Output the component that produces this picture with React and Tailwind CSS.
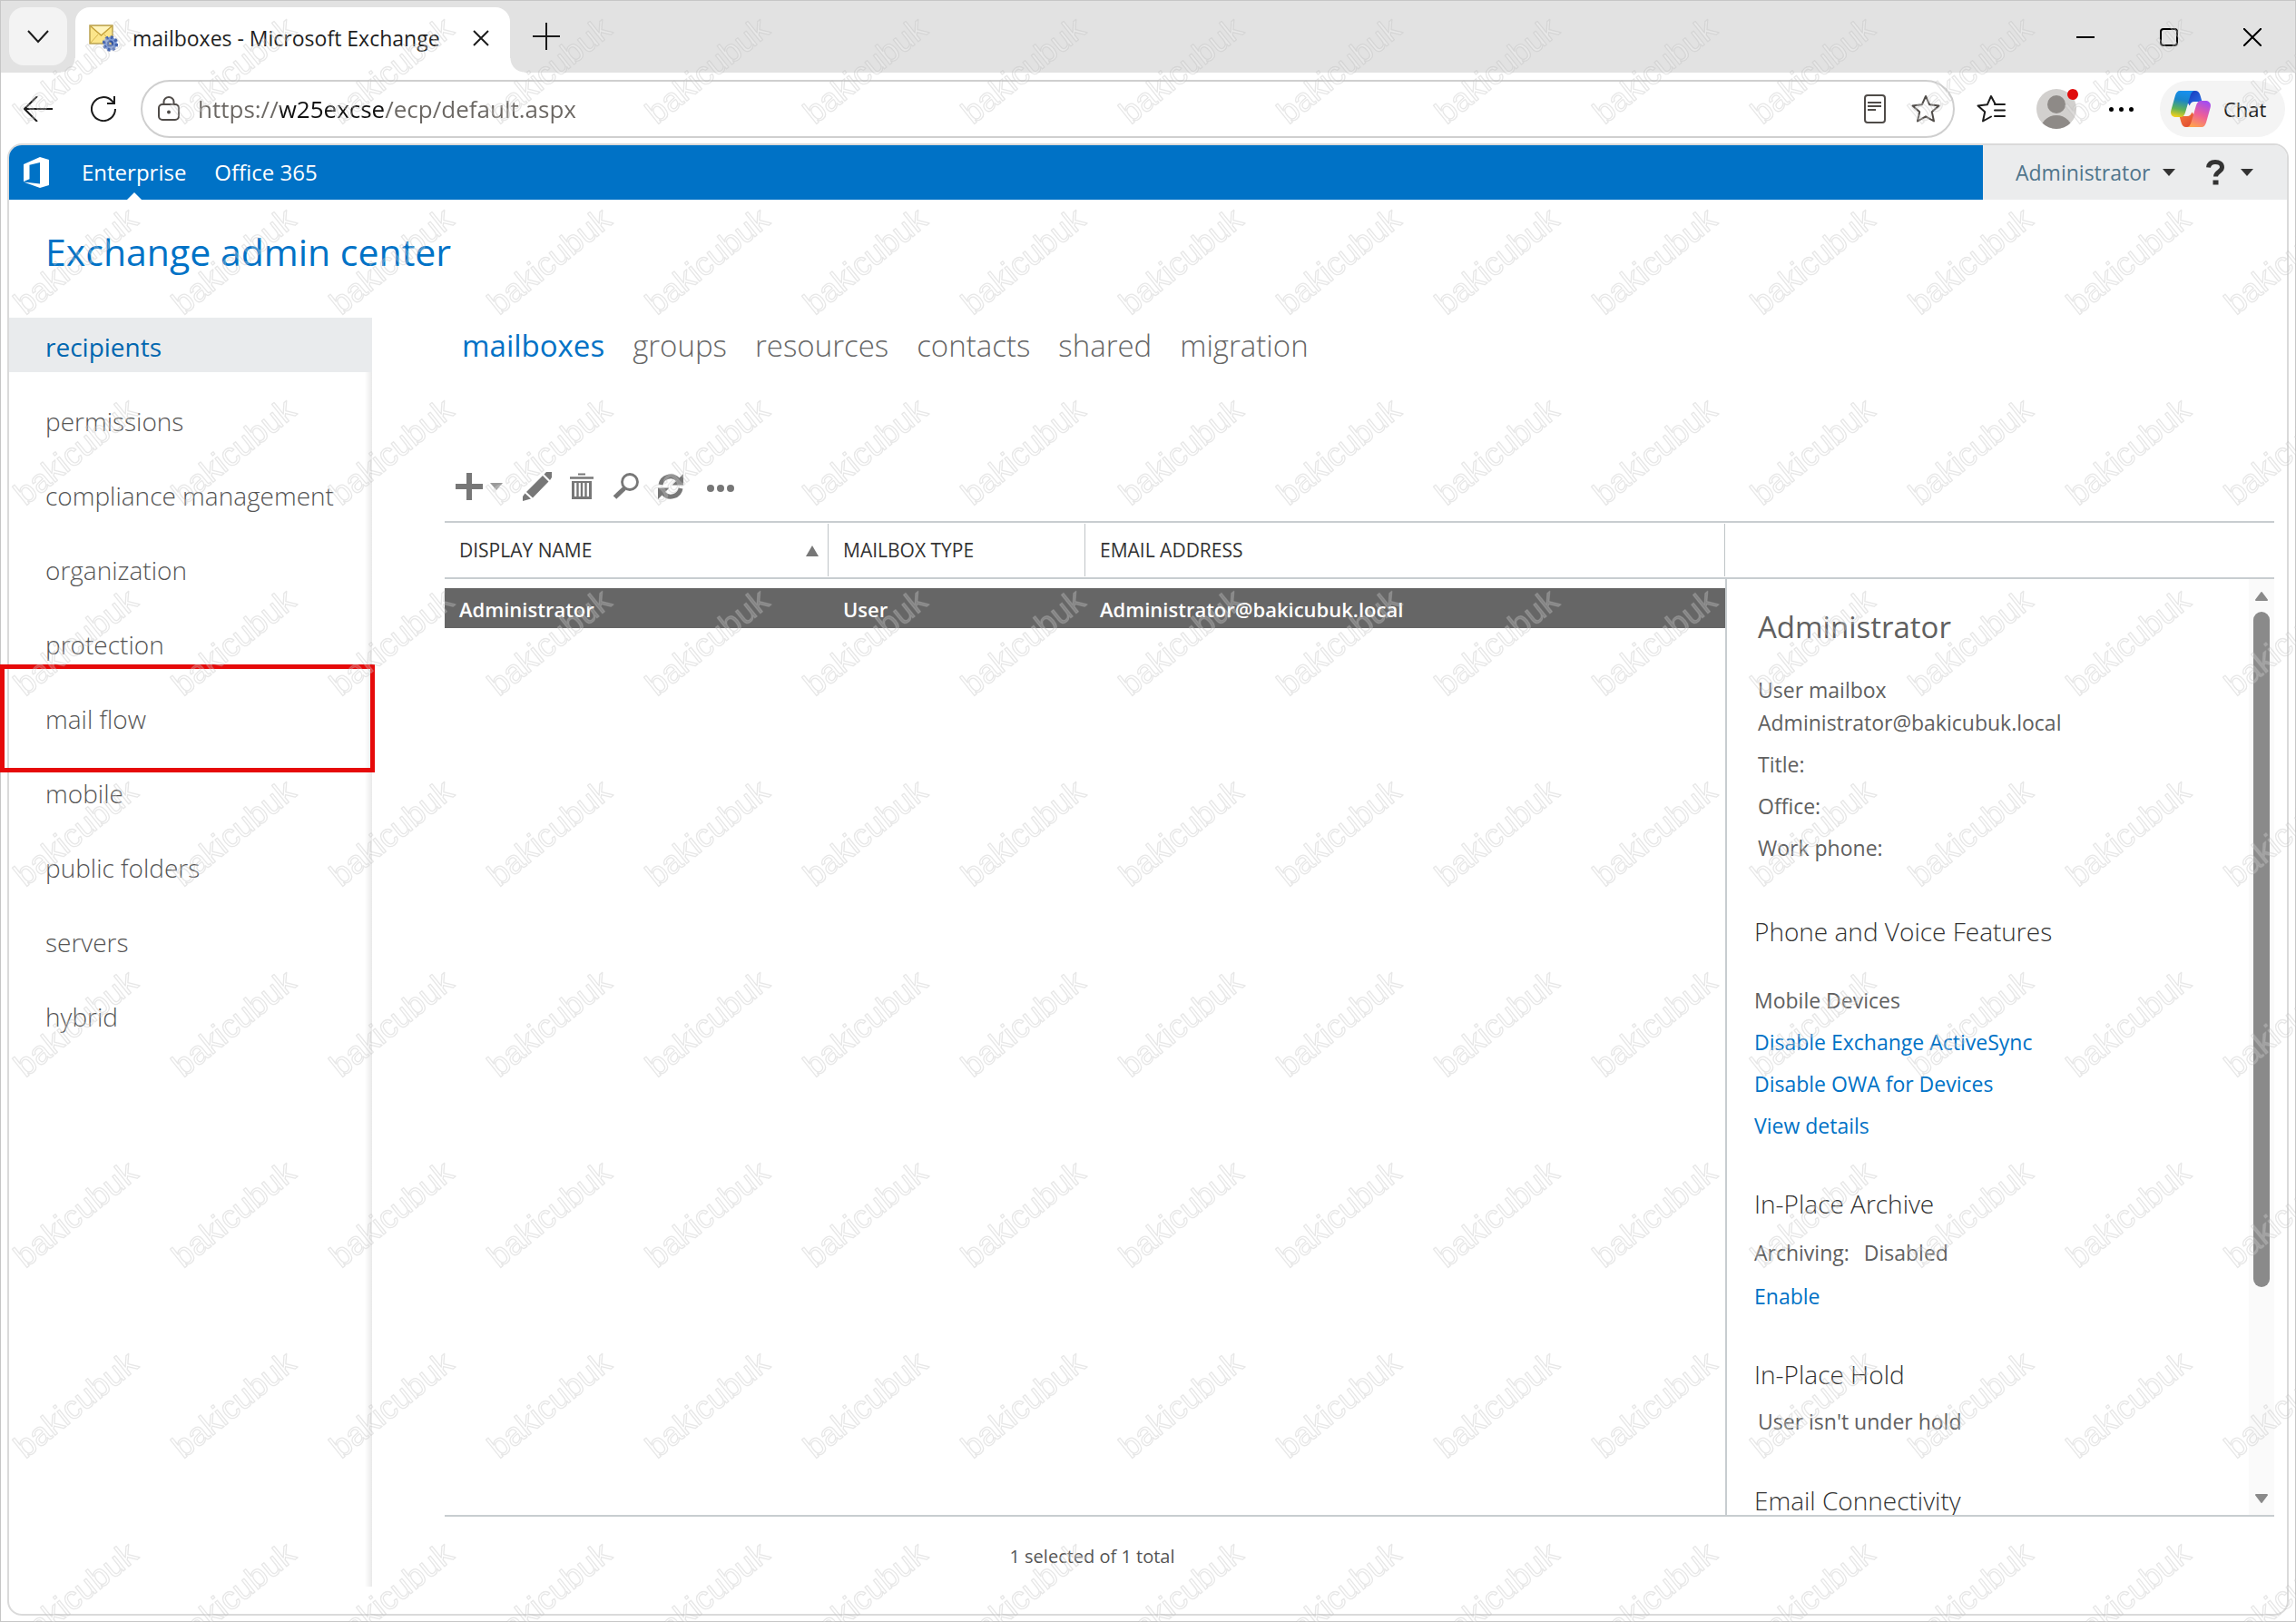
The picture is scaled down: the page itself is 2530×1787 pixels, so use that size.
import React from "react";

const navItems = [
  "recipients",
  "permissions",
  "compliance management",
  "organization",
  "protection",
  "mail flow",
  "mobile",
  "public folders",
  "servers",
  "hybrid",
];

const tabs = ["mailboxes", "groups", "resources", "contacts", "shared", "migration"];

const mailboxes = [
  { name: "Administrator", type: "User", email: "Administrator@bakicubuk.local" },
];

function Caret({ className }) {
  return (
    <svg className={className} viewBox="0 0 14 8" preserveAspectRatio="none" aria-hidden="true">
      <path d="M0 0h14L7 8z" fill="currentColor" />
    </svg>
  );
}

function TabStrip() {
  return (
    <div className="flex h-[79px] items-start bg-[#e2e2e2] pl-[9px]">
      <button
        aria-label="Tab actions"
        className="mt-[7px] flex h-16 w-16 items-center justify-center rounded-2xl bg-[#f3f3f3]"
      >
        <svg className="h-4 w-6" viewBox="0 0 24 16" fill="none" stroke="#1b1b1b" strokeWidth="2">
          <path d="M1 2l11 12L23 2" />
        </svg>
      </button>

      {/* Active tab */}
      <div className="relative ml-[9px] mt-[7px] flex h-[72px] w-[479px] items-center rounded-t-2xl bg-white pb-[5px] pl-[15px] pr-[23px]">
        <span className="absolute bottom-0 -left-4 h-4 w-4 bg-[radial-gradient(circle_at_0_0,transparent_15px,white_16px)]" />
        <span className="absolute bottom-0 -right-4 h-4 w-4 bg-[radial-gradient(circle_at_100%_0,transparent_15px,white_16px)]" />
        <svg className="h-8 w-8 shrink-0" viewBox="0 0 32 32" aria-hidden="true">
          <rect x="1" y="2" width="25" height="20" fill="#fbe58a" stroke="#b9a04e" strokeWidth="1.5" />
          <path d="M2 3l11.500 10L25 3" fill="#fff4bd" stroke="#c4a13c" strokeWidth="1.500" />
          <path d="M2 21l8-9M25 21l-8-9" stroke="#d6b44c" strokeWidth="1" />
          <circle cx="23.500" cy="22" r="7.500" fill="#7f9bd6" />
          <circle cx="23.500" cy="22" r="7" fill="none" stroke="#4464ae" strokeWidth="3.500" strokeDasharray="3 2.500" />
          <circle cx="23.500" cy="22" r="3.500" fill="#34549e" />
          <circle cx="23.500" cy="22" r="1.300" fill="#e6c26a" />
        </svg>
        <span className="ml-4 whitespace-nowrap text-[23px] leading-8 text-[#1f1f1f]">
          mailboxes - Microsoft Exchange
        </span>
        <button aria-label="Close tab" className="ml-auto">
          <svg className="h-[18px] w-[18px]" viewBox="0 0 18 18" stroke="#1b1b1b" strokeWidth="2">
            <path d="M1 1l16 16M17 1L1 17" />
          </svg>
        </button>
      </div>

      <button aria-label="New tab" className="ml-[25px] mt-6">
        <svg className="h-[30px] w-[30px]" viewBox="0 0 30 30" stroke="#1b1b1b" strokeWidth="2">
          <path d="M15 0v30M0 15h30" />
        </svg>
      </button>

      {/* Window controls */}
      <div className="ml-auto mt-[30px] flex gap-[72px] pr-[37px]">
        <button aria-label="Minimize">
          <svg className="h-5 w-5" viewBox="0 0 20 20" stroke="#000" strokeWidth="2">
            <path d="M0 10h20" />
          </svg>
        </button>
        <button aria-label="Maximize">
          <svg className="h-5 w-5" viewBox="0 0 20 20" fill="none" stroke="#000" strokeWidth="2">
            <rect x="1" y="1" width="18" height="18" rx="3" />
          </svg>
        </button>
        <button aria-label="Close window">
          <svg className="h-5 w-5" viewBox="0 0 20 20" stroke="#000" strokeWidth="2">
            <path d="M0 0l20 20M20 0L0 20" />
          </svg>
        </button>
      </div>
    </div>
  );
}

function CopilotLogo() {
  return (
    <svg className="h-10 w-11" viewBox="0 0 44 40" aria-hidden="true">
      <defs>
        <linearGradient id="cpLeft" x1="0.5" y1="0" x2="0.3" y2="1">
          <stop offset="0" stopColor="#1790ee" />
          <stop offset="0.35" stopColor="#1a86c9" />
          <stop offset="0.7" stopColor="#5fb257" />
          <stop offset="1" stopColor="#f2cf1c" />
        </linearGradient>
        <linearGradient id="cpRight" x1="0.7" y1="0" x2="0.3" y2="1">
          <stop offset="0" stopColor="#a44df0" />
          <stop offset="0.5" stopColor="#ee5e98" />
          <stop offset="1" stopColor="#ffa24d" />
        </linearGradient>
        <linearGradient id="cpTop" x1="0" y1="0" x2="1" y2="1">
          <stop offset="0" stopColor="#1433b8" />
          <stop offset="1" stopColor="#2b74e8" />
        </linearGradient>
        <linearGradient id="cpBottom" x1="0" y1="0" x2="1" y2="1">
          <stop offset="0" stopColor="#f97e3c" />
          <stop offset="1" stopColor="#d9402f" />
        </linearGradient>
      </defs>
      <path d="M22 0h5c3 0 4.500 2 5.300 4.500L34.500 12H26c-3 0-4.500 2-5.300 4.500L17 10z" fill="url(#cpTop)" />
      <path d="M22 40h-5c-3 0-4.500-2-5.300-4.500L9.500 28H18c3 0 4.500-2 5.300-4.500L28 30z" fill="url(#cpBottom)" />
      <path d="M10 0h17c-3 0-4.500 2-5.400 5L16 24c-1 3-2.500 5-5.500 5H6c-4.500 0-7-3-5.500-8L5 5c1-3 2.500-5 5-5z" fill="url(#cpLeft)" />
      <path d="M34 40H17c3 0 4.500-2 5.400-5L28 16c1-3 2.500-5 5.500-5H38c4.500 0 7 3 5.500 8L39 35c-1 3-2.500 5-5 5z" fill="url(#cpRight)" />
    </svg>
  );
}

function AddressBar() {
  return (
    <div className="flex h-[78px] items-center bg-white pl-[25px] pr-[11px] pt-[2px]">
      <button aria-label="Back">
        <svg className="h-7 w-8" viewBox="0 0 32 28" fill="none" stroke="#1b1b1b" strokeWidth="2">
          <path d="M32 14H1M15 0L1 14l14 14" />
        </svg>
      </button>
      <button aria-label="Refresh" className="ml-[42px]">
        <svg className="h-7 w-7" viewBox="0 0 28 28" fill="none" stroke="#1b1b1b" strokeWidth="2">
          <path d="M27 14A13 13 0 1 1 23.500 5.200L25.500 7M26 0v8h-8" />
        </svg>
      </button>

      <form className="ml-[27px] flex h-16 flex-1 items-center rounded-full border-2 border-[#cfcfcf] pl-[17px] pr-[14px]">
        <svg className="h-7 w-6" viewBox="0 0 24 28" fill="none" stroke="#4f4b48" strokeWidth="2">
          <rect x="1" y="9" width="22" height="17" rx="4" />
          <path d="M6.500 9V6a5.500 5 0 0 1 11 0v3" />
          <circle cx="12" cy="17.500" r="2" fill="#4f4b48" stroke="none" />
        </svg>
        <input
          aria-label="Address"
          defaultValue="https://w25excse/ecp/default.aspx"
          className="ml-5 min-w-0 flex-1 bg-[linear-gradient(90deg,#6b6763_91px,#111111_91px,#111111_206px,#6b6763_206px)] bg-clip-text text-[26px] leading-9 text-transparent outline-none"
        />
        <button type="button" aria-label="Immersive reader">
          <svg className="h-8 w-6" viewBox="0 0 24 32" fill="none" stroke="#4f4b48" strokeWidth="2">
            <rect x="1" y="1" width="22" height="30" rx="3" />
            <path d="M4 9h15M4 13h15M4 17h9" />
          </svg>
        </button>
        <button type="button" aria-label="Add to favorites" className="ml-7">
          <svg className="h-8 w-8" viewBox="0 0 32 32" fill="none" stroke="#4f4b48" strokeWidth="2" strokeLinejoin="round">
            <path d="M16 2l4.200 9.300 10.300 1.100-7.700 6.900 2.200 10.200-9-5.200-9 5.200 2.200-10.200-7.700-6.900 10.300-1.100z" />
          </svg>
        </button>
      </form>

      <button aria-label="Favorites" className="ml-6">
        <svg className="h-8 w-8" viewBox="0 0 32 32" fill="none" stroke="#1b1b1b" strokeWidth="2" strokeLinejoin="round" strokeLinecap="round">
          <path d="M20.500 10.500L16 2l-4.200 9.300-10.300 1.100 7.700 6.900L7 29.500l9-5" />
          <path d="M20 11h11M20 17.500h11M20 24h11" />
        </svg>
      </button>
      <button aria-label="Profile" className="relative ml-[34px]">
        <svg className="h-11 w-11" viewBox="0 0 44 44">
          <clipPath id="avatar">
            <circle cx="22" cy="22" r="22" />
          </clipPath>
          <g clipPath="url(#avatar)">
            <rect width="44" height="44" fill="#d2d0ce" />
            <circle cx="22" cy="17" r="10" fill="#8e8a87" />
            <circle cx="22" cy="47" r="18" fill="#8e8a87" />
          </g>
        </svg>
        <span className="absolute -right-0.5 top-0 h-3 w-3 rounded-full bg-[#e00b0b]" />
      </button>
      <button aria-label="Settings and more" className="ml-9 flex gap-[6px]">
        <span className="h-[5px] w-[5px] rounded-full bg-black" />
        <span className="h-[5px] w-[5px] rounded-full bg-black" />
        <span className="h-[5px] w-[5px] rounded-full bg-black" />
      </button>
      <button className="ml-[29px] flex h-[62px] w-[138px] items-center gap-[14px] rounded-full bg-[#f4f4f4] pl-3">
        <CopilotLogo />
        <span className="text-[22px] leading-8 text-[#1f1f1f]">Chat</span>
      </button>
    </div>
  );
}

function SuiteBar() {
  return (
    <header className="flex h-[60px] items-stretch">
      <div className="flex flex-1 items-center bg-[#0072c6] pl-4 text-2xl text-white">
        <svg className="h-[34px] w-8" viewBox="0 0 32 34" aria-hidden="true">
          <path d="M0 8L18 0l10 3v28l-10 3L0 27.500l18 2V6L6.500 8.800v15.400L0 27z" fill="#fff" />
        </svg>
        <nav className="ml-8 flex h-full items-center gap-[31px]">
          <a href="#enterprise" className="relative flex h-full items-center">
            Enterprise
            <Caret className="absolute bottom-0 left-1/2 h-2 w-4 -translate-x-1/2 rotate-180" />
          </a>
          <a href="#office365">Office 365</a>
        </nav>
      </div>
      <div className="flex w-[335px] items-center bg-[#ebeced] pl-9 text-[#333]">
        <button className="flex items-center gap-[14px] text-[23px] text-[#50758b]">
          Administrator
          <Caret className="h-2 w-[14px] text-[#333]" />
        </button>
        <button aria-label="Help" className="ml-8 flex items-center gap-4">
          <svg className="h-7 w-6" viewBox="0 0 24 28" fill="none" aria-hidden="true">
            <path d="M4.500 8.500C5 4.500 8 2.500 12 2.500c4.500 0 7.500 2.200 7.500 5.800 0 5-7 5-7 10.200" stroke="#333" strokeWidth="5" />
            <rect x="9.500" y="22.500" width="6" height="5" fill="#333" />
          </svg>
          <Caret className="h-2 w-[14px]" />
        </button>
      </div>
    </header>
  );
}

function Sidebar() {
  return (
    <nav className="mb-[30px] flex w-[400px] shrink-0 flex-col gap-[22px] bg-[linear-gradient(to_left,#e9e9e9,white_8px)]">
      {navItems.map((item, i) => (
        <a
          key={item}
          href={"#" + item}
          className={
            i === 0
              ? "flex h-[60px] items-center bg-[#e9ebed] pl-10 pt-1 text-[28px] text-[#0067b0]"
              : "relative flex h-[60px] items-center pl-10 pt-[3px] text-[28px] font-light text-[#555]"
          }
        >
          {item}
          {item === "mail flow" && (
            <span className="absolute -left-[10px] -right-[3px] -top-7 h-[119px] border-[5px] border-[#e60a0a]" />
          )}
        </a>
      ))}
    </nav>
  );
}

function Toolbar() {
  return (
    <div className="mt-[107px] flex h-[38px] items-center pl-3 text-[#777]">
      <button aria-label="New" className="flex items-center gap-2">
        <svg className="h-[30px] w-[30px]" viewBox="0 0 30 30" stroke="currentColor" strokeWidth="6">
          <path d="M15 0v30M0 15h30" />
        </svg>
        <Caret className="h-2 w-[14px] text-[#999]" />
      </button>
      <button aria-label="Edit" className="ml-[22px]">
        <svg className="h-8 w-8" viewBox="0 0 32 32" fill="currentColor">
          <path d="M22 4l6.500 6.500L11 28.500 4 22zM23.500 2.500L26 0h6v6l-2 3zM2.500 23.500L9 29.500 0 32v-5z" />
        </svg>
      </button>
      <button aria-label="Delete" className="ml-5">
        <svg className="h-[30px] w-[26px]" viewBox="0 0 26 30" fill="none" stroke="currentColor" strokeWidth="3">
          <path d="M9 1.500h8" strokeWidth="2" />
          <path d="M0 5.500h26" strokeWidth="2.500" />
          <path d="M3.500 9v18.500h19V9" />
          <path d="M3 10h20" strokeWidth="2" />
          <path d="M8.500 10v16M13 10v16M17.500 10v16" strokeWidth="2.400" />
        </svg>
      </button>
      <button aria-label="Search" className="ml-[22px]">
        <svg className="h-[30px] w-[28px]" viewBox="0 0 28 30" fill="none" stroke="currentColor">
          <circle cx="18" cy="10" r="8.500" strokeWidth="2.800" />
          <path d="M12 17L1.500 27" strokeWidth="5" />
        </svg>
      </button>
      <button aria-label="Refresh" className="ml-5">
        <svg className="h-[30px] w-[30px]" viewBox="0 0 30 30" fill="none" stroke="currentColor" strokeWidth="5">
          <path d="M4 13A11 11 0 0 1 23 7.500M26 17A11 11 0 0 1 7 22.500" />
          <path d="M29 1v12.500H16.500zM1 29V16.500h12.500z" fill="currentColor" stroke="none" />
        </svg>
      </button>
      <button aria-label="More" className="ml-[25px] mt-1 flex gap-[3px]">
        <span className="h-2 w-2 rounded-full bg-[#777]" />
        <span className="h-2 w-2 rounded-full bg-[#777]" />
        <span className="h-2 w-2 rounded-full bg-[#777]" />
      </button>
    </div>
  );
}

function MailboxTable() {
  return (
    <table className="w-full table-fixed border-separate border-spacing-0 text-left">
      <thead>
        <tr className="h-16 text-[21px] text-[#333]">
          <th scope="col" className="w-[423px] border-y-2 border-[#c8cdd0] p-0 font-normal">
            <span className="flex h-[58px] items-center border-r border-[#bfc4c7] pl-4 pt-[2px]">
              DISPLAY NAME
              <Caret className="ml-auto mr-[10px] h-3 w-[14px] rotate-180 text-[#777]" />
            </span>
          </th>
          <th scope="col" className="w-[283px] border-y-2 border-[#c8cdd0] p-0 font-normal">
            <span className="flex h-[58px] items-center border-r border-[#bfc4c7] pl-4 pt-[2px]">MAILBOX TYPE</span>
          </th>
          <th scope="col" className="border-y-2 border-[#c8cdd0] p-0 font-normal">
            <span className="flex h-[58px] items-center border-r border-[#bfc4c7] pl-4 pt-[2px]">EMAIL ADDRESS</span>
          </th>
        </tr>
        <tr className="h-[10px]" aria-hidden="true" />
      </thead>
      <tbody>
        {mailboxes.map((m) => (
          <tr key={m.email} className="h-11 bg-[#666] text-[22px] font-semibold text-white">
            <td className="pb-0 pl-4 pt-[2px]">{m.name}</td>
            <td className="pb-0 pl-4 pt-[2px]">{m.type}</td>
            <td className="pb-0 pl-4 pt-[2px]">{m.email}</td>
          </tr>
        ))}
      </tbody>
    </table>
  );
}

function SectionTitle({ children, className }) {
  return <h3 className={"text-[28px] leading-10 font-light text-[#333] " + className}>{children}</h3>;
}

function Details() {
  return (
    <aside className="flex w-[605px] shrink-0 flex-col">
      <div className="h-16 shrink-0 border-y-2 border-[#c8cdd0]" />
      <div className="flex min-h-0 flex-1 border-l-2 border-[#c8cdd0]">
        <div className="flex-1 overflow-hidden pl-[30px] text-[23px] leading-[46px] text-[#606060]">
          <div className="pl-1">
            <h2 className="mt-[31px] text-[33px] leading-11">Administrator</h2>
            <p className="mt-[29px] leading-9">User mailbox</p>
            <p className="mb-[5px] leading-9">Administrator@bakicubuk.local</p>
            <p>Title:</p>
            <p>Office:</p>
            <p>Work phone:</p>
          </div>

          <SectionTitle className="mb-[33px] mt-[49px]">Phone and Voice Features</SectionTitle>
          <p>Mobile Devices</p>
          <ul className="text-[#0072c6]">
            <li><a href="#activesync">Disable Exchange ActiveSync</a></li>
            <li><a href="#owa">Disable OWA for Devices</a></li>
            <li><a href="#details">View details</a></li>
          </ul>

          <SectionTitle className="mb-[10px] mt-[43px]">In-Place Archive</SectionTitle>
          <div className="leading-12">
            <p className="flex gap-4">
              <span>Archiving:</span>
              <span>Disabled</span>
            </p>
            <a href="#enable" className="text-[#0072c6]">Enable</a>
          </div>

          <SectionTitle className="mb-[9px] mt-[42px]">In-Place Hold</SectionTitle>
          <p className="pl-1">User isn't under hold</p>

          <SectionTitle className="mt-11">Email Connectivity</SectionTitle>
        </div>

        {/* Scrollbar */}
        <div className="flex w-7 flex-col items-center bg-[#fafafa] pb-3 pt-[13px] text-[#8a8a8a]">
          <svg className="h-[11px] w-4" viewBox="0 0 16 11">
            <path d="M8 2l6 8H2z" fill="currentColor" stroke="currentColor" strokeWidth="2" strokeLinejoin="round" />
          </svg>
          <div className="mt-3 h-[744px] w-[18px] rounded-full bg-[#8a8a8a]" />
          <svg className="mt-auto h-[11px] w-4" viewBox="0 0 16 11">
            <path d="M8 9l6-8H2z" fill="currentColor" stroke="currentColor" strokeWidth="2" strokeLinejoin="round" />
          </svg>
        </div>
      </div>
    </aside>
  );
}

function Watermark() {
  return (
    <svg className="pointer-events-none absolute inset-0 h-full w-full" aria-hidden="true">
      <defs>
        <pattern id="mark" width="174" height="210" patternUnits="userSpaceOnUse">
          <text
            transform="translate(28 138) rotate(-39)"
            fill="#fff"
            fillOpacity="0.2"
            stroke="#b4b4b4"
            strokeOpacity="0.32"
            strokeWidth="1.3"
            strokeLinejoin="round"
            className="font-['Liberation_Sans',sans-serif] text-[36px]"
          >
            bakicubuk
          </text>
        </pattern>
      </defs>
      <rect width="100%" height="100%" fill="url(#mark)" />
    </svg>
  );
}

export default function App() {
  return (
    <div className="relative flex h-screen flex-col overflow-hidden bg-white p-px font-['Open_Sans',sans-serif] shadow-[inset_0_0_0_1px_#c6c6c6]">
      <TabStrip />
      <AddressBar />

      <div className="mx-[7px] mb-[6px] flex min-h-0 flex-1 flex-col">
        <div className="flex min-h-0 flex-1 flex-col rounded-2xl border-2 border-[#dadada]">
          <div className="overflow-hidden rounded-t-[14px]">
            <SuiteBar />
          </div>
          <h1 className="mb-[45px] mt-[29px] pl-10 text-[41px] leading-14 text-[#0072c6]">
            Exchange admin center
          </h1>

          <div className="flex min-h-0 flex-1">
            <Sidebar />
            <main className="ml-20 mr-[14px] flex min-w-0 flex-1 flex-col">
              <nav className="flex h-[60px] items-center gap-[31px] pl-[19px] pt-[2px] text-[33px] font-light text-[#666]">
                {tabs.map((tab, i) => (
                  <a key={tab} href={"#" + tab} className={i === 0 ? "font-normal text-[#0072c6]" : ""}>
                    {tab}
                  </a>
                ))}
              </nav>
              <Toolbar />
              <div className="mt-[19px] flex min-h-0 flex-1 border-b-2 border-[#c8cdd0]">
                <div className="min-w-0 flex-1">
                  <MailboxTable />
                </div>
                <Details />
              </div>
              <footer className="flex h-[107px] justify-between">
                <p className="ml-4 flex-1 pt-7 text-center text-xl leading-8 text-[#555]">1 selected of 1 total</p>
                <div className="w-[605px]" />
              </footer>
            </main>
          </div>
        </div>
      </div>

      <Watermark />
    </div>
  );
}
